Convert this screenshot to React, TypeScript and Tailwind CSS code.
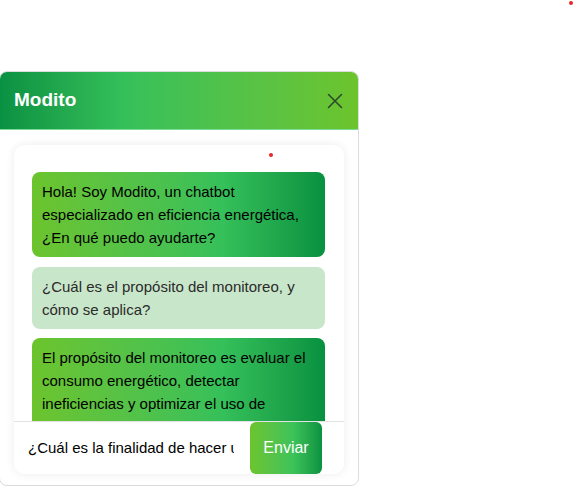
import { X } from 'lucide-react';

interface Message {
    from: 'bot' | 'user';
    text: string;
}

const messages: Message[] = [
    { from: 'bot', text: 'Hola! Soy Modito, un chatbot especializado en eficiencia energética, ¿En qué puedo ayudarte?' },
    { from: 'user', text: '¿Cuál es el propósito del monitoreo, y cómo se aplica?' },
    {
        from: 'bot',
        text: 'El propósito del monitoreo es evaluar el consumo energético, detectar ineficiencias y optimizar el uso de energía para reducir costos y emisiones.',
    },
];

export default function App() {
    return (
        <div className="relative w-[576px] h-[487px] overflow-hidden bg-white font-['Liberation_Sans',Arial,sans-serif]">
            {/* stray red dots */}
            <span className="absolute left-[569px] top-[1px] h-[4px] w-[4px] rounded-full bg-[#e8262b]" />
            <span className="absolute left-[269px] top-[153px] h-[4px] w-[4px] rounded-full bg-[#e8262b]" />

            {/* Chat widget */}
            <div className="-ml-px mt-[71px] flex h-[415px] w-[360px] flex-col overflow-hidden rounded-lg border border-[#dcdcdc] bg-white">
                {/* Header */}
                <div className="flex h-[58px] shrink-0 items-center justify-between border-b border-[#7ddc98] bg-gradient-to-r from-[#099142] via-[#35c05a] via-35% to-[#6cc42c] pl-[14px] pr-[10px]">
                    <h1 className="text-[19px] font-bold text-white">Modito</h1>
                    <X className="h-[26px] w-[26px] text-[#2c4a2c]" strokeWidth={1.4} />
                </div>

                {/* Body */}
                <div className="flex flex-1 flex-col px-[14px] pt-[15px] pb-[11px]">
                    <div className="flex flex-1 flex-col overflow-hidden rounded-[10px] bg-white shadow-[0_0_10px_rgba(0,0,0,0.08)]">
                        <div className="flex h-[276px] shrink-0 flex-col gap-[9.5px] overflow-hidden pl-[18px] pr-[19px] pt-[27px]">
                            {messages.map((m, i) => (
                                <div
                                    key={i}
                                    className={
                                        m.from === 'bot'
                                            ? 'shrink-0 rounded-lg bg-gradient-to-r from-[#6cc42c] via-[#35c05a] via-65% to-[#069140] px-[10px] py-[8px] text-[15px] leading-[23px] text-black'
                                            : 'shrink-0 rounded-lg bg-[#c8e6c9] px-[10px] py-[8px] text-[15px] leading-[23px] text-[#2b2b2b]'
                                    }
                                >
                                    {m.text}
                                </div>
                            ))}
                        </div>
                        <div className="flex flex-1 items-stretch border-t border-[#e2e2e2] pl-[14px] pr-[22px]">
                            <input
                                className="min-w-0 flex-1 bg-transparent pr-[16px] text-[15px] text-black outline-none"
                                defaultValue="¿Cuál es la finalidad de hacer un monitoreo?"
                            />
                            <button className="w-[72px] rounded-md bg-gradient-to-r from-[#6cc42c] via-[#3cc35a] via-60% to-[#089241] text-[16px] text-white">
                                Enviar
                            </button>
                        </div>
                    </div>
                </div>
            </div>
        </div>
    );
}
